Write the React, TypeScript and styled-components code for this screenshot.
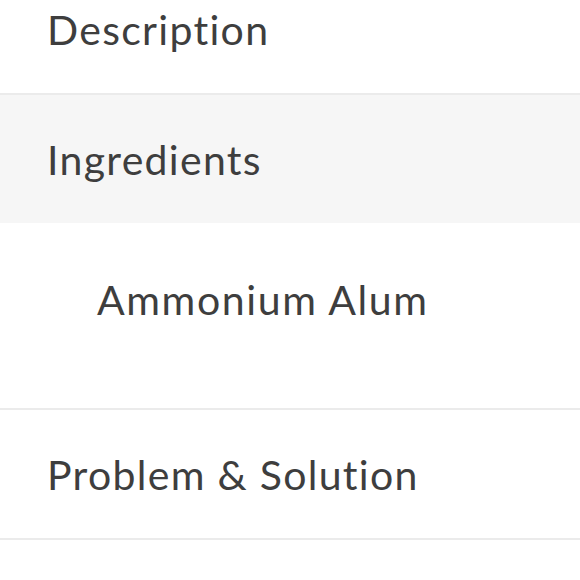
import styled, { createGlobalStyle } from "styled-components";

const GlobalStyle = createGlobalStyle`
  html, body {
    margin: 0;
    padding: 0;
    background: #ffffff;
    overflow: hidden;
  }
  body {
    font-family: Lato, "Open Sans", sans-serif;
    color: #3e3e3e;
  }
`;

const List = styled.div`
  display: flex;
  flex-direction: column;
  margin-top: -35px;
`;

const Row = styled.div<{ $active?: boolean }>`
  display: flex;
  align-items: center;
  height: 128px;
  padding-left: 47px;
  background: ${(p) => (p.$active ? "#f6f6f6" : "#ffffff")};
  border-bottom: ${(p) => (p.$active ? "none" : "2px solid #ebebeb")};
  font-size: 41px;
  letter-spacing: 1.3px;
`;

const Panel = styled.div`
  display: flex;
  flex-direction: column;
  padding: 46px 0 78px 97px;
  border-bottom: 2px solid #ebebeb;
`;

const Item = styled.div`
  font-size: 41px;
  letter-spacing: 1.6px;
  line-height: 61px;
`;

const sections = [
  { title: "Description" },
  { title: "Ingredients", open: true, items: ["Ammonium Alum"] },
  { title: "Problem & Solution" },
];

function App() {
  return (
    <>
      <GlobalStyle />
      <List>
        {sections.map((s) => (
          <div key={s.title}>
            <Row $active={s.open}>{s.title}</Row>
            {s.open && (
              <Panel>
                {s.items?.map((it) => (
                  <Item key={it}>{it}</Item>
                ))}
              </Panel>
            )}
          </div>
        ))}
        <Row />
      </List>
    </>
  );
}

export default App;
